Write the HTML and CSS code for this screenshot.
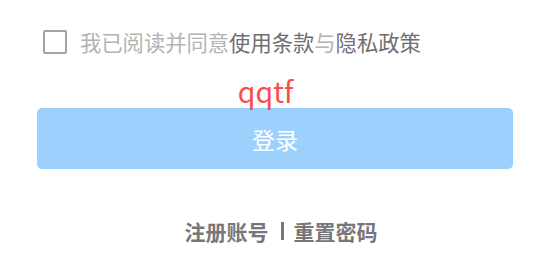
FILE: index.html
```html
<!DOCTYPE html>
<html lang="zh-CN">
<head>
<meta charset="utf-8">
<link rel="stylesheet" href="styles.css">
</head>
<body>
<div class="page">
  <label class="agree">
    <span class="checkbox"></span>
    <span class="agree-text">我已阅读并同意<span class="strong">使用条款</span>与<span class="strong">隐私政策</span></span>
  </label>
  <div class="code">qqtf</div>
  <button class="login">登录</button>
  <div class="links">
    <span class="link">注册账号</span>
    <span class="sep"></span>
    <span class="link">重置密码</span>
  </div>
</div>
</body>
</html>
```
FILE: styles.css
```css
html, body {
  margin: 0;
  padding: 0;
  background: #ffffff;
}
body {
  font-family: "Noto Sans CJK SC", "Noto Sans", sans-serif;
}
.page {
  width: 550px;
  height: 275px;
  box-sizing: border-box;
  padding: 30px 37px 0 37px;
  display: flex;
  flex-direction: column;
}
.agree {
  display: flex;
  align-items: center;
  height: 24px;
  padding-left: 6px;
}
.checkbox {
  width: 20px;
  height: 20px;
  border: 2px solid #a3a3a3;
  border-radius: 2px;
  flex: none;
}
.agree-text {
  margin-left: 13px;
  font-size: 21.3px;
  line-height: 24px;
  color: #b3b3b3;
  white-space: nowrap;
}
.agree-text .strong {
  color: #6f6f6f;
}
.code {
  margin-top: 22px;
  height: 30px;
  line-height: 30px;
  font-size: 28.5px;
  color: #fb4b4b;
  text-align: center;
  position: relative;
  z-index: 1;
  margin-bottom: 2px;
  padding-right: 19px;
}
.login {
  height: 61px;
  width: 476px;
  border: none;
  border-radius: 5px;
  background: #9cd1fe;
  color: #ffffff;
  font-family: "Noto Sans CJK SC", "Noto Sans", sans-serif;
  font-size: 23px;
  padding: 0;
}
.links {
  margin-top: 50px;
  display: flex;
  align-items: center;
  justify-content: center;
  padding-left: 12px;
}
.link {
  font-size: 21px;
  line-height: 24px;
  font-weight: 700;
  color: #777777;
}
.sep {
  width: 3px;
  height: 18px;
  background: #777777;
  margin: 0 10px 0 12px;
}
```
